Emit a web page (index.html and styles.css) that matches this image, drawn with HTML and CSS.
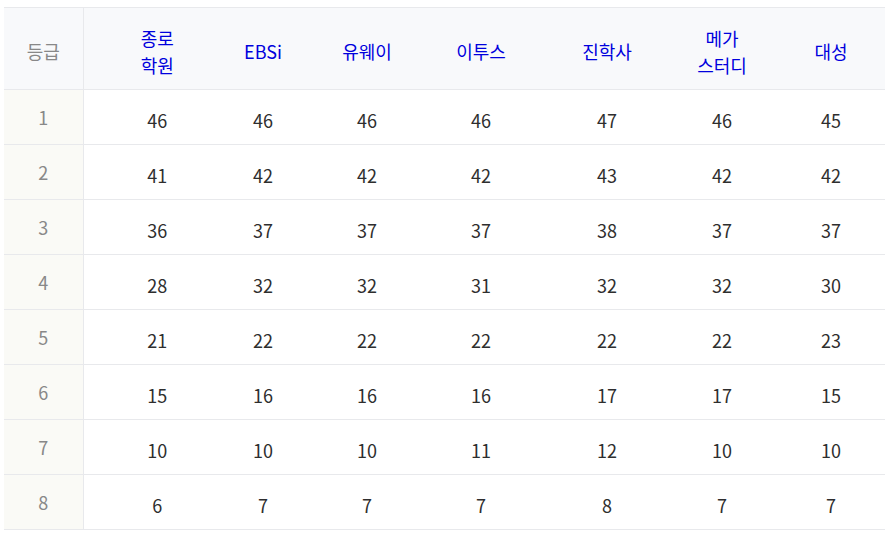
FILE: index.html
```html
<!DOCTYPE html>
<html lang="ko">
<head>
<meta charset="utf-8">
<link rel="stylesheet" href="styles.css">
</head>
<body>
<div class="wrap">
<table class="grade-table">
  <colgroup>
    <col class="c-rank">
    <col class="c1"><col class="c2"><col class="c3"><col class="c4"><col class="c5"><col class="c6"><col class="c7">
  </colgroup>
  <thead>
    <tr>
      <th class="rank-head">등급</th>
      <th>종로<br>학원</th>
      <th>EBSi</th>
      <th>유웨이</th>
      <th>이투스</th>
      <th>진학사</th>
      <th>메가<br>스터디</th>
      <th class="last">대성</th>
    </tr>
  </thead>
  <tbody>
    <tr><td class="rank">1</td><td>46</td><td>46</td><td>46</td><td>46</td><td>47</td><td>46</td><td class="last">45</td></tr>
    <tr><td class="rank">2</td><td>41</td><td>42</td><td>42</td><td>42</td><td>43</td><td>42</td><td class="last">42</td></tr>
    <tr><td class="rank">3</td><td>36</td><td>37</td><td>37</td><td>37</td><td>38</td><td>37</td><td class="last">37</td></tr>
    <tr><td class="rank">4</td><td>28</td><td>32</td><td>32</td><td>31</td><td>32</td><td>32</td><td class="last">30</td></tr>
    <tr><td class="rank">5</td><td>21</td><td>22</td><td>22</td><td>22</td><td>22</td><td>22</td><td class="last">23</td></tr>
    <tr><td class="rank">6</td><td>15</td><td>16</td><td>16</td><td>16</td><td>17</td><td>17</td><td class="last">15</td></tr>
    <tr><td class="rank">7</td><td>10</td><td>10</td><td>10</td><td>11</td><td>12</td><td>10</td><td class="last">10</td></tr>
    <tr><td class="rank">8</td><td>6</td><td>7</td><td>7</td><td>7</td><td>8</td><td>7</td><td class="last">7</td></tr>
  </tbody>
</table>
</div>
</body>
</html>
```
FILE: styles.css
```css
html, body {
  margin: 0;
  padding: 0;
  background: #ffffff;
}
body {
  font-family: "Noto Sans CJK KR", "Noto Sans", sans-serif;
  font-size: 18px;
  color: #333333;
}
.wrap {
  padding: 7px 0 0 4px;
  overflow: hidden;
}
.grade-table {
  border-collapse: collapse;
  table-layout: fixed;
  width: 881px;
}
.c-rank { width: 79px; }
.c1 { width: 148px; }
.c2 { width: 64px; }
.c3 { width: 144px; }
.c4 { width: 84px; }
.c5 { width: 168px; }
.c6 { width: 62px; }
.c7 { width: 132px; }

.grade-table th {
  background: #f8f9fb;
  color: #0000dd;
  font-weight: normal;
  line-height: 27px;
  height: 82px;
  padding: 6px 0 0 0;
  box-sizing: border-box;
  text-align: center;
  vertical-align: middle;
  border-top: 1px solid #e8e9ec;
  border-bottom: 1px solid #e8e9ec;
  white-space: nowrap;
}
.grade-table th.rank-head {
  color: #888888;
  border-right: 1px solid #e8e9ec;
}
.grade-table td {
  height: 55px;
  box-sizing: border-box;
  padding: 5px 0 0 0;
  text-align: center;
  vertical-align: middle;
  line-height: 24px;
  border-bottom: 1px solid #e8e9ec;
  color: #2e2e2e;
}
.grade-table td.rank {
  background: #fafaf6;
  color: #888888;
  padding: 0 0 1px 0;
  border-right: 1px solid #e8e9ec;
}
.grade-table .last {
  padding-left: 24px;
}
```
